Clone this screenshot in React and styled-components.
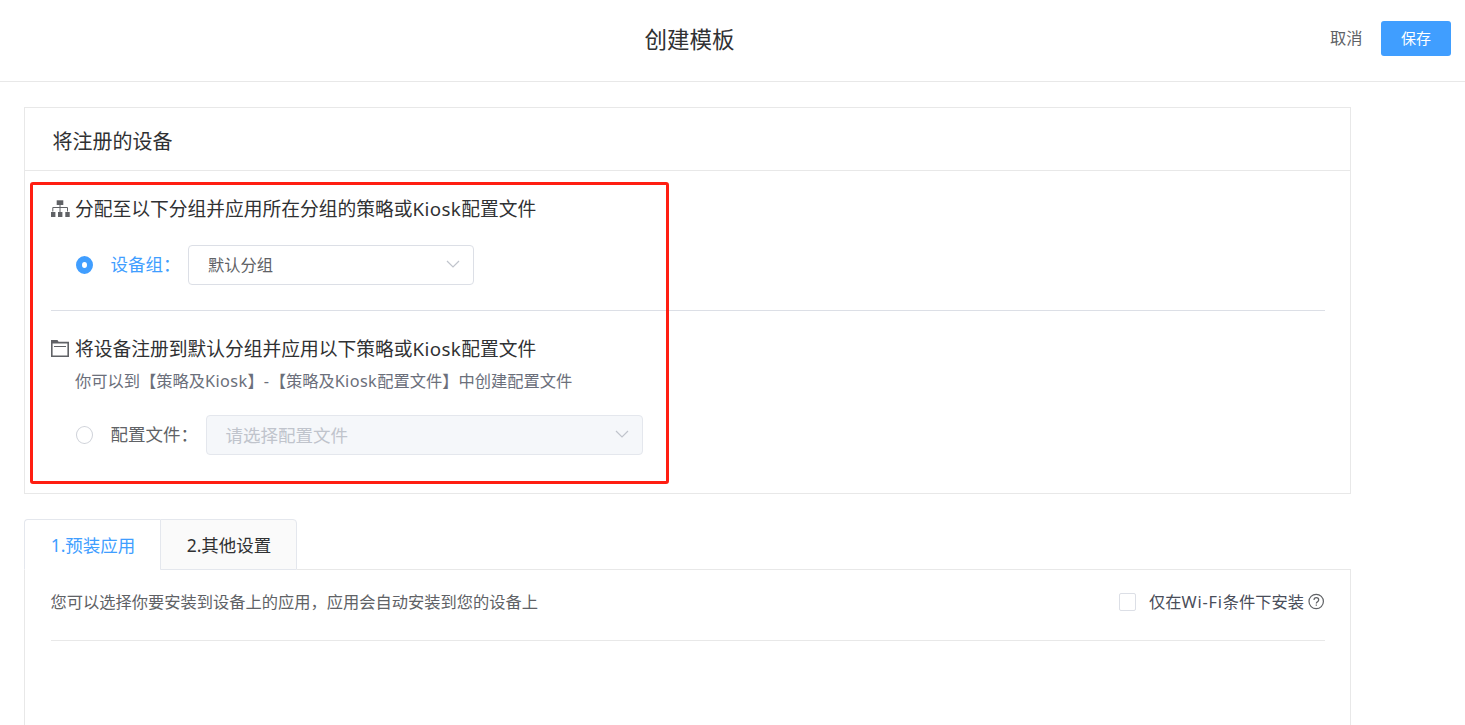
import React, { useState } from "react";
import styled, { createGlobalStyle, css } from "styled-components";

const palette = {
  brand: "#409eff",
  title: "#303133",
  text: "#606266",
  hint: "#6b6f7b",
  placeholder: "#c0c4cc",
  line: "#e8e8e8",
  border: "#dcdfe6",
  tabBorder: "#e4e7ed",
  disabled: "#f5f7fa",
  mark: "#ff1e12",
};

const GroupIcon = () => (
  <svg width="20" height="20" viewBox="0 0 20 20" fill={palette.text}>
    <rect x="6.7" y="1.3" width="6.6" height="4.7" />
    <rect x="1" y="13" width="4.4" height="5" />
    <rect x="8" y="13" width="4.4" height="5" />
    <rect x="15.3" y="13" width="4.4" height="5" />
    <path
      d="M10 6v7M2.8 12.5v-4h14.7v4"
      fill="none"
      stroke={palette.text}
    />
  </svg>
);

const FolderIcon = () => (
  <svg width="20" height="20" viewBox="0 0 20 20" fill="none">
    <path d="M1.8 17.2V3.6h16.4v13.6z" stroke={palette.text} strokeWidth="1.6" />
    <path d="M1 1h6.5l1.5 2.8H1z" fill={palette.text} />
    <path d="M4 7.5h12" stroke={palette.text} />
  </svg>
);

const HelpIcon = () => (
  <svg width="17" height="17" viewBox="0 0 17 17" fill="none" stroke={palette.text} strokeWidth="1.2">
    <circle cx="8.2" cy="8.5" r="7.2" />
    <path d="M6 7c0-1.5 1-2.3 2.3-2.3s2.4.8 2.4 2.2c0 1.7-2.4 1.9-2.4 3.5" />
    <path d="M8.3 11.4v1.4" />
  </svg>
);

const Arrow = () => (
  <svg width="14" height="8" viewBox="0 0 14 8" fill="none">
    <path d="M1 1l6 6 6-6" stroke={palette.placeholder} strokeWidth="1.2" />
  </svg>
);

const App = () => {
  const [target, setTarget] = useState("group");
  const [activeTab, setActiveTab] = useState(0);
  const tabs = ["1.预装应用", "2.其他设置"];

  return (
    <Page>
      <GlobalStyle />
      <Header>
        <PageTitle>创建模板</PageTitle>
        <CancelButton>取消</CancelButton>
        <SaveButton>保存</SaveButton>
      </Header>

      <Card>
        <CardTitle>将注册的设备</CardTitle>
        <CardBody>
          <Highlight />
          <SectionTitle>
            <GroupIcon />
            <span>
              分配至以下分组并应用所在分组的策略或<Latin $gap={0.4}>Kiosk</Latin>配置文件
            </span>
          </SectionTitle>
          <OptionRow>
            <Radio $checked={target === "group"} onClick={() => setTarget("group")} />
            <OptionLabel $checked={target === "group"} $width={77.5}>
              设备组：
            </OptionLabel>
            <Select $width={286}>
              默认分组
              <Arrow />
            </Select>
          </OptionRow>
          <Divider />
          <SectionTitle>
            <FolderIcon />
            <span>
              将设备注册到默认分组并应用以下策略或<Latin $gap={0.4}>Kiosk</Latin>配置文件
            </span>
          </SectionTitle>
          <Hint>
            你可以到【策略及<Latin $gap={0.4}>Kiosk</Latin>】<Latin $gap={0.6}>-</Latin>
            【策略及<Latin $gap={0.4}>Kiosk</Latin>配置文件】中创建配置文件
          </Hint>
          <OptionRow>
            <Radio $checked={target === "profile"} onClick={() => setTarget("profile")} />
            <OptionLabel $checked={target === "profile"} $width={95.5}>
              配置文件：
            </OptionLabel>
            <Select $width={437} $disabled>
              请选择配置文件
              <Arrow />
            </Select>
          </OptionRow>
        </CardBody>
      </Card>

      <TabHeader>
        {tabs.map((tab, index) => (
          <TabButton
            key={tab}
            $active={activeTab === index}
            onClick={() => setActiveTab(index)}
          >
            {tab}
          </TabButton>
        ))}
        <TabLine />
      </TabHeader>
      <TabContent>
        <AppBar>
          <AppHint>您可以选择你要安装到设备上的应用，应用会自动安装到您的设备上</AppHint>
          <Checkbox />
          <WifiLabel>
            仅在<Latin $gap={0.8}>Wi-Fi</Latin>条件下安装
          </WifiLabel>
          <HelpIcon />
        </AppBar>
      </TabContent>
    </Page>
  );
};

const GlobalStyle = createGlobalStyle`
  * {
    box-sizing: border-box;
  }

  body {
    margin: 0;
    overflow: hidden;
    background: #fff;
  }

  button {
    font-family: inherit;
    font-weight: inherit;
    cursor: pointer;
  }
`;

const Page = styled.div`
  display: flex;
  flex-direction: column;
  height: 725px;
  font-family: "Noto Sans", "Noto Sans CJK SC", sans-serif;
  font-weight: 380;
  text-spacing-trim: space-all;
  white-space: nowrap;
  color: ${palette.title};
`;

const Latin = styled.span`
  letter-spacing: ${(props) => props.$gap}px;
`;

const Header = styled.header`
  display: flex;
  align-items: center;
  flex: none;
  height: 82px;
  padding: 0 14px 4px 49px;
  border-bottom: 1px solid ${palette.line};
`;

const PageTitle = styled.h1`
  flex: 1;
  margin: 0;
  padding-top: 2px;
  font-size: 22.5px;
  font-weight: inherit;
  line-height: 30px;
  text-align: center;
`;

const CancelButton = styled.button`
  width: 32px;
  margin-right: 19px;
  padding: 0 0 4px;
  border: none;
  background: none;
  color: ${palette.text};
  font-size: 16.25px;
`;

const SaveButton = styled.button`
  width: 70px;
  height: 35px;
  padding: 0 0 2px;
  border: none;
  border-radius: 3px;
  background: ${palette.brand};
  color: #fff;
  font-size: 15px;
`;

const Card = styled.section`
  flex: none;
  width: 1327px;
  height: 387px;
  margin: 25px 0 0 24px;
  border: 1px solid ${palette.line};
`;

const CardTitle = styled.h2`
  height: 63px;
  margin: 0;
  padding: 4px 0 0 27.5px;
  border-bottom: 1px solid ${palette.line};
  font-size: 20px;
  font-weight: inherit;
  line-height: 60px;
`;

const CardBody = styled.div`
  position: relative;
  padding: 23px 25px 0 26px;
`;

/* red frame drawn over both options */
const Highlight = styled.div`
  position: absolute;
  top: 11px;
  left: 5px;
  width: 639px;
  height: 302px;
  border: 3px solid ${palette.mark};
  border-radius: 3px;
  pointer-events: none;
`;

const SectionTitle = styled.h3`
  display: flex;
  align-items: center;
  gap: 5px;
  height: 30px;
  margin: 0 0 0 -1px;
  font-size: 18.75px;
  font-weight: inherit;
  line-height: 30px;
`;

const OptionRow = styled.div`
  display: flex;
  align-items: center;
  height: 40px;
  margin-top: 21px;
  padding-left: 25px;
`;

const Radio = styled.span`
  flex: none;
  width: 17px;
  height: 18px;
  border: 1px solid #cfd2d9;
  border-radius: 50%;
  background: #fff;
  cursor: pointer;

  ${(props) =>
    props.$checked &&
    css`
      border: 6.5px solid ${palette.brand};
    `}
`;

const OptionLabel = styled.span`
  width: ${(props) => props.$width}px;
  margin-left: 17.5px;
  padding-bottom: 3px;
  color: ${(props) => (props.$checked ? palette.brand : palette.text)};
  font-size: 17.5px;
`;

const Select = styled.div`
  display: flex;
  align-items: center;
  justify-content: space-between;
  width: ${(props) => props.$width}px;
  height: 40px;
  padding: 0 13px 2px ${(props) => (props.$disabled ? "18.5px" : "19px")};
  border: 1px solid ${(props) => (props.$disabled ? palette.tabBorder : palette.border)};
  border-radius: 4px;
  background: ${(props) => (props.$disabled ? palette.disabled : "#fff")};
  color: ${(props) => (props.$disabled ? palette.placeholder : palette.text)};
  font-size: ${(props) => (props.$disabled ? "17.5px" : "16.25px")};
`;

const Divider = styled.div`
  height: 1px;
  margin: 25px 0 23px;
  background: ${palette.border};
`;

const Hint = styled.p`
  margin: 5px 0 0 24px;
  color: ${palette.hint};
  font-size: 16.25px;
  line-height: 25px;
`;

const TabHeader = styled.div`
  display: flex;
  flex: none;
  width: 1327px;
  height: 51px;
  margin: 25px 0 0 24px;
`;

const TabButton = styled.button`
  width: 136px;
  padding: 0 0 0 1px;
  border: 1px solid ${palette.tabBorder};
  border-right: none;
  border-bottom-color: ${(props) => (props.$active ? "transparent" : palette.tabBorder)};
  border-radius: 4px 0 0 0;
  background: ${(props) => (props.$active ? "#fff" : "#fafafa")};
  color: ${(props) => (props.$active ? palette.brand : palette.title)};
  font-size: 17.5px;

  & + & {
    width: 137px;
    border-right: 1px solid ${palette.tabBorder};
    border-radius: 0 4px 0 0;
  }
`;

const TabLine = styled.div`
  flex: 1;
  border-bottom: 1px solid ${palette.line};
`;

const TabContent = styled.div`
  flex: 1;
  width: 1327px;
  margin-left: 24px;
  padding: 0 25px 0 26px;
  border: 1px solid ${palette.line};
  border-width: 0 1px;
`;

const AppBar = styled.div`
  display: flex;
  align-items: center;
  height: 71px;
  padding-bottom: 7px;
  border-bottom: 1px solid ${palette.line};
`;

const AppHint = styled.span`
  flex: 1;
  margin-left: -0.5px;
  padding-bottom: 2px;
  color: ${palette.text};
  font-size: 16.25px;
`;

const Checkbox = styled.span`
  width: 17px;
  height: 18px;
  border: 1px solid ${palette.border};
  border-radius: 2px;
`;

const WifiLabel = styled.span`
  margin: 0 4px 0 13px;
  padding-bottom: 2px;
  color: #494d59;
  font-size: 16.25px;
`;

export default App;
